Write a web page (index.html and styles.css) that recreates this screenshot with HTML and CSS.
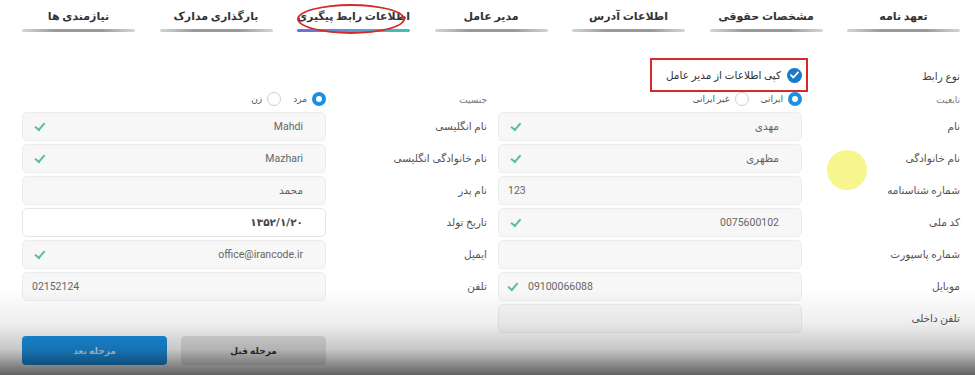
FILE: index.html
```html
<!DOCTYPE html>
<html lang="fa" dir="rtl">
<head>
    <meta charset="UTF-8">
    <meta name="viewport" content="width=device-width, initial-scale=1.0">
    <title>اطلاعات رابط پیگیری</title>
    <link rel="stylesheet" href="styles.css">
</head>
<body>
<div class="page">
    <ul class="steps">
        <li><span class="step-title">تعهد نامه</span></li>
        <li><span class="step-title">مشخصات حقوقی</span></li>
        <li><span class="step-title">اطلاعات آدرس</span></li>
        <li><span class="step-title">مدیر عامل</span></li>
        <li class="active"><span class="step-title circled">اطلاعات رابط پیگیری</span></li>
        <li><span class="step-title">بارگذاری مدارک</span></li>
        <li><span class="step-title">نیازمندی ها</span></li>
    </ul>

    <div class="form">
        <!-- row: type -->
        <div class="lbl lbl-top">نوع رابط</div>
        <div class="cell">
            <span class="copy-box">
                <span class="tick-round">
                    <svg width="9" height="8" viewBox="0 0 9 8"><polyline points="1,4.2 3.4,6.5 8,1.3" fill="none" stroke="#fff" stroke-width="1.8" stroke-linecap="round" stroke-linejoin="round"/></svg>
                </span>
                کپی اطلاعات از مدیر عامل
            </span>
        </div>
        <div></div>
        <div></div>

        <!-- row: radios -->
        <div class="lbl lbl-small">تابعیت</div>
        <div class="cell radios">
            <span class="radio on"></span><span class="radio-text">ایرانی</span>
            <span class="radio"></span><span class="radio-text">غیر ایرانی</span>
        </div>
        <div class="lbl lbl-small lbl-left">جنسیت</div>
        <div class="cell radios">
            <span class="radio on"></span><span class="radio-text">مرد</span>
            <span class="radio"></span><span class="radio-text">زن</span>
        </div>

        <div class="lbl">نام</div>
        <div class="field"><span>مهدی</span><span class="ok"></span></div>
        <div class="lbl lbl-left">نام انگلیسی</div>
        <div class="field"><span>Mahdi</span><span class="ok"></span></div>

        <div class="lbl">نام خانوادگی</div>
        <div class="field"><span>مظهری</span><span class="ok"></span></div>
        <div class="lbl lbl-left">نام خانوادگی انگلیسی</div>
        <div class="field"><span>Mazhari</span><span class="ok"></span></div>

        <div class="lbl">شماره شناسنامه</div>
        <div class="field ltr"><span>123</span></div>
        <div class="lbl lbl-left">نام پدر</div>
        <div class="field"><span>محمد</span></div>

        <div class="lbl">کد ملی</div>
        <div class="field"><span>0075600102</span><span class="ok"></span></div>
        <div class="lbl lbl-left">تاریخ تولد</div>
        <div class="field white"><span class="date">۱۳۵۲/۱/۲۰</span></div>

        <div class="lbl">شماره پاسپورت</div>
        <div class="field"></div>
        <div class="lbl lbl-left">ایمیل</div>
        <div class="field"><span>office@irancode.ir</span><span class="ok"></span></div>

        <div class="lbl">موبایل</div>
        <div class="field ltr"><span class="ok"></span><span>09100066088</span></div>
        <div class="lbl lbl-left">تلفن</div>
        <div class="field ltr"><span>02152124</span></div>

        <div class="lbl">تلفن داخلی</div>
        <div class="field"></div>
        <div></div>
        <div></div>

        <div></div>
        <div></div>
        <div></div>
        <div class="buttons">
            <button class="btn-next">مرحله بعد</button>
            <button class="btn-prev">مرحله قبل</button>
        </div>
    </div>

    <div class="cursor-dot"></div>
    <div class="video-shade"></div>
</div>
</body>
</html>
```

FILE: styles.css
```css
body {
    margin: 0;
    background-color: #fff;
    font-family: Roboto, "DejaVu Sans", sans-serif;
    color: #555;
}

.page {
    position: relative;
    width: 975px;
    height: 375px;
    overflow: hidden;
}

/* steps bar */
.steps {
    display: flex;
    gap: 24.5px;
    list-style: none;
    margin: 0;
    padding: 8px 15px 0 22px;
}

.steps li {
    position: relative;
    width: 113px;
    display: flex;
    flex-direction: column;
    align-items: center;
}

.steps li::after {
    content: "";
    display: block;
    width: 100%;
    height: 3px;
    margin-top: 3px;
    border-radius: 2px;
    background: linear-gradient(to right, #d6d6d6, #9a9a9a 30%, #9a9a9a 70%, #d6d6d6);
}

.steps li.active::after {
    background: linear-gradient(to right, #6a6fd8, #5a9ad6 50%, #3ec4b4);
}

.step-title {
    font-size: 11px;
    font-weight: bold;
    line-height: 18px;
    color: #333;
    white-space: nowrap;
}

.circled::before {
    content: "";
    position: absolute;
    left: 0;
    right: 5px;
    top: -4px;
    height: 26px;
    border: 2px solid #d42a2a;
    border-radius: 50%;
}

/* form grid */
.form {
    display: grid;
    grid-template-columns: 158px 304px 172px 304px;
    grid-template-rows: 34px 20px;
    grid-auto-rows: 32px;
    margin-top: 26px;
    padding: 0 15px 0 22px;
}

.lbl {
    font-size: 10.5px;
    line-height: 29px;
    color: #555;
    white-space: nowrap;
}

.lbl-left {
    padding-right: 11px;
}

.lbl-top {
    line-height: 38px;
    color: #444;
}

.lbl-small {
    line-height: 16px;
    font-size: 9px;
    color: #777;
}

.cell {
    display: flex;
    align-items: center;
}

.copy-box {
    display: inline-flex;
    align-items: center;
    gap: 6px;
    height: 30px;
    padding: 0 4px 0 14px;
    margin-right: -6px;
    border: 2px solid #d42a2a;
    font-size: 10.5px;
    color: #333;
}

.tick-round {
    width: 15px;
    height: 15px;
    border-radius: 50%;
    background-color: #1b79c9;
    display: flex;
    align-items: center;
    justify-content: center;
}

.radios {
    align-items: flex-start;
    height: 16px;
}

.radio {
    width: 14px;
    height: 14px;
    box-sizing: border-box;
    border-radius: 50%;
    border: 1px solid #cfcfcf;
    background-color: #fff;
}

.radio.on {
    border: 4px solid #1a8fe3;
}

.radio-text {
    font-size: 9px;
    line-height: 14px;
    color: #555;
    margin: 0 5px 0 12px;
}

.field {
    height: 29px;
    box-sizing: border-box;
    display: flex;
    align-items: center;
    justify-content: space-between;
    padding: 0 22px 0 12px;
    background-color: #f7f7f7;
    border: 1px solid #ececec;
    border-radius: 5px;
    font-size: 10.5px;
    color: #666;
}

.field.ltr {
    direction: ltr;
    justify-content: flex-start;
    gap: 10px;
    padding: 0 12px 0 9px;
}

.field.white {
    background-color: #fff;
    border-color: #e6e6e6;
}

.date {
    font-weight: bold;
    color: #444;
}

.ok {
    box-sizing: border-box;
    width: 10px;
    height: 6px;
    border-left: 2px solid #5cbf90;
    border-bottom: 2px solid #5cbf90;
    transform: rotate(-50deg) translate(1px, -1px);
}

.buttons {
    display: flex;
    gap: 14px;
    direction: ltr;
    align-items: flex-start;
}

.buttons button {
    width: 145px;
    height: 29px;
    border: none;
    border-radius: 4px;
    font-family: inherit;
    font-size: 9px;
    font-weight: bold;
}

.btn-next {
    background-color: #1c93e6;
    color: #cde6f7;
}

.btn-prev {
    background-color: #e4e4e4;
    color: #333;
}

/* video overlays */
.cursor-dot {
    position: absolute;
    left: 827px;
    top: 150px;
    width: 40px;
    height: 40px;
    border-radius: 50%;
    background-color: #f7f58e;
    filter: blur(0.6px);
}

.video-shade {
    position: absolute;
    left: 0;
    right: 0;
    bottom: 0;
    height: 85px;
    pointer-events: none;
    background: linear-gradient(to bottom, rgba(0, 0, 0, 0), rgba(0, 0, 0, 0.07) 40%, rgba(0, 0, 0, 0.22) 70%, rgba(0, 0, 0, 0.62));
}
```
